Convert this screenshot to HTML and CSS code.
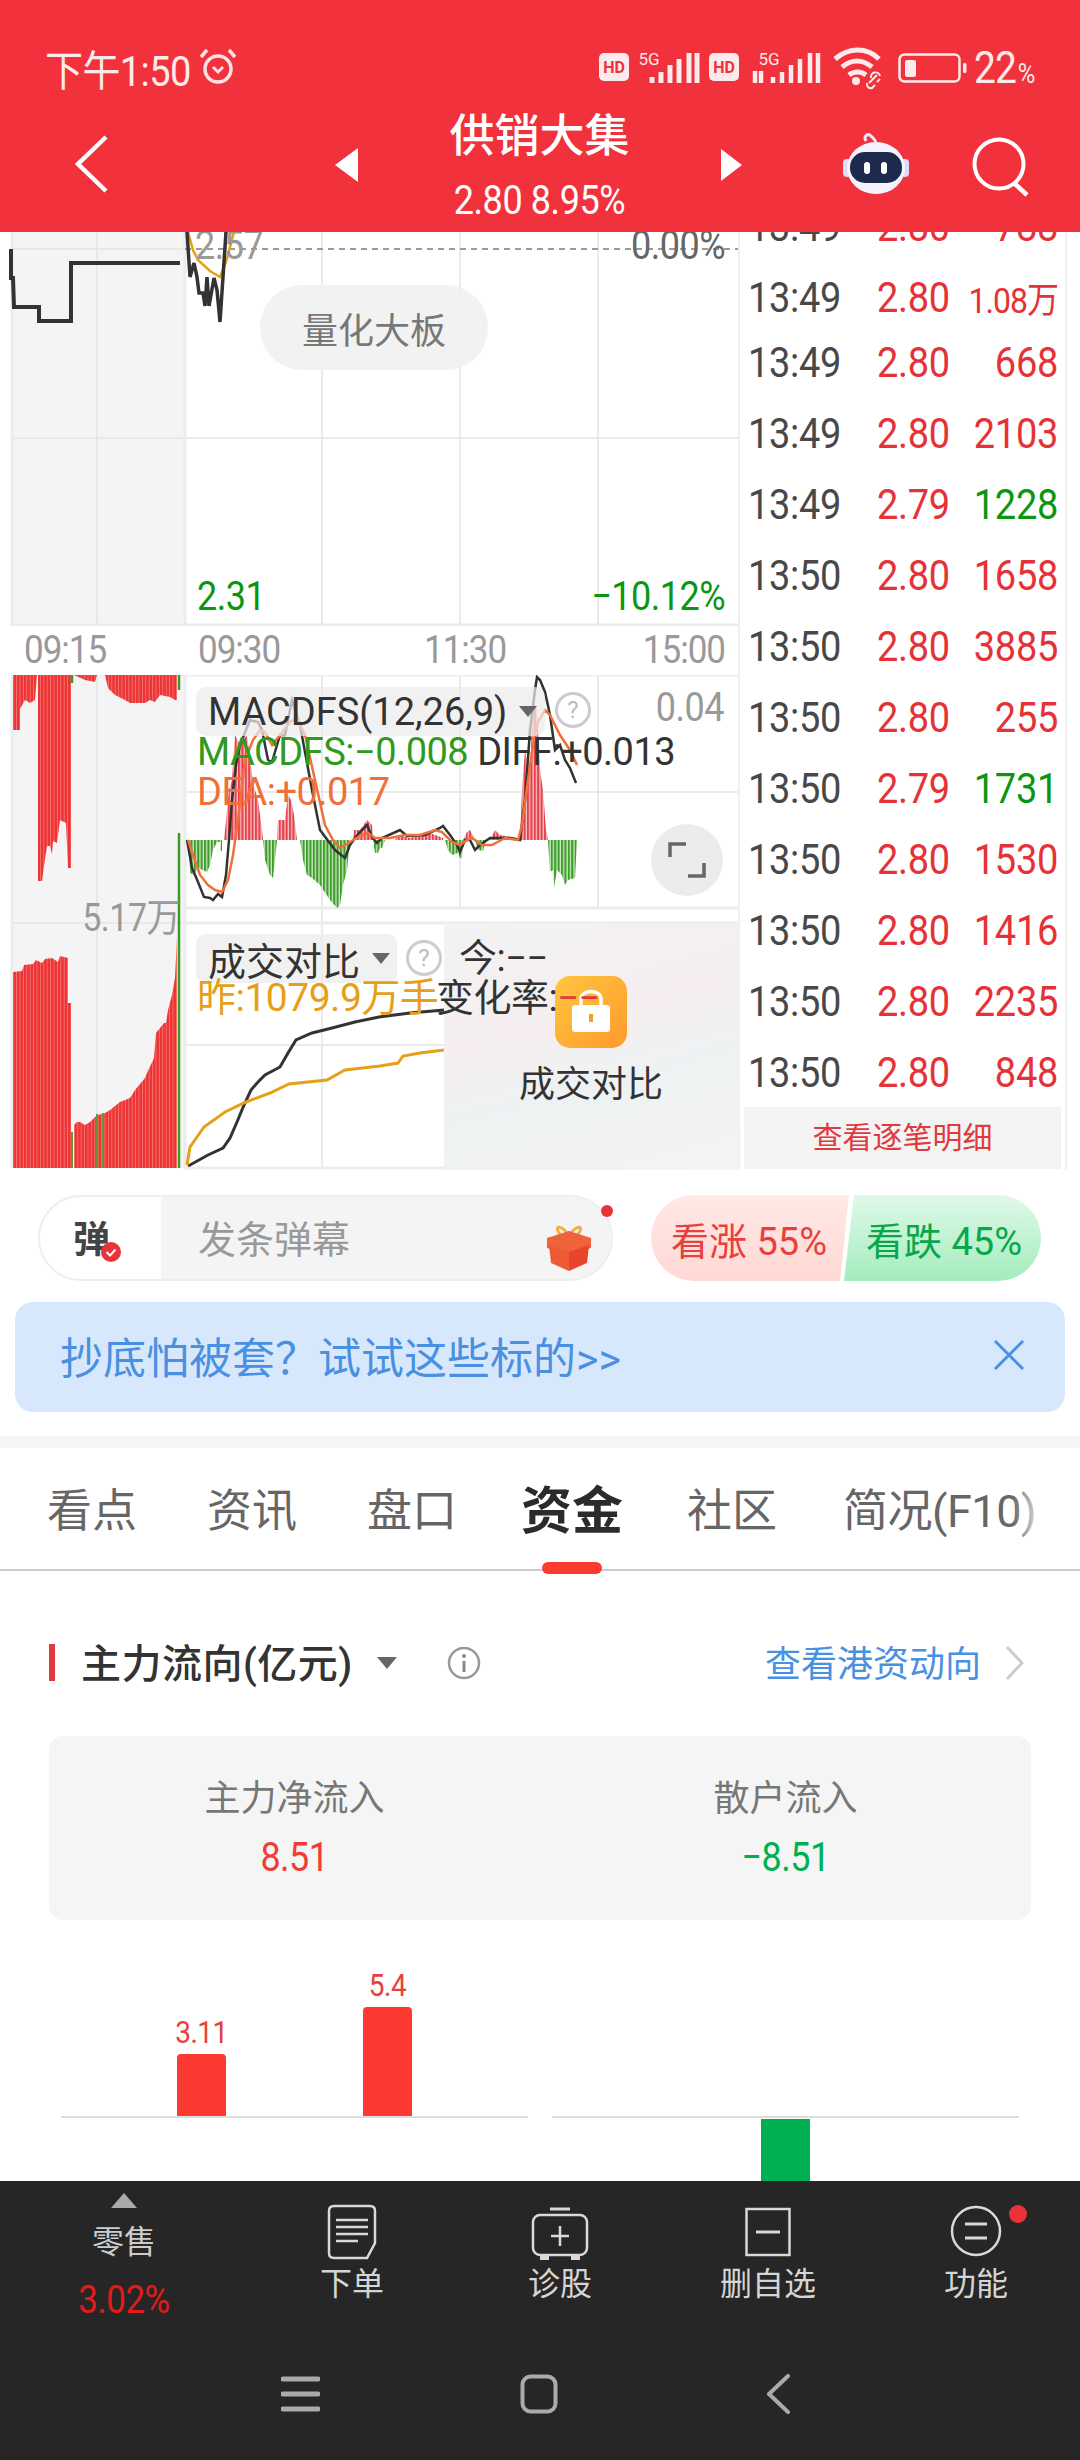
FILE: index.html
```html
<!DOCTYPE html>
<html lang="zh-CN">
<head>
  <meta charset="UTF-8">
  <meta name="viewport" content="width=device-width, initial-scale=1">
  <title>供销大集</title>
  <link rel="stylesheet" href="styles.css">
</head>

<body>
<div class="page">

  <header class="topbar">
    <div class="status">
      <span class="clock">下午1:50</span>
      <svg class="alarm" viewBox="0 0 40 40"><circle cx="20" cy="22" r="13" fill="none" stroke="#fde3e3" stroke-width="3.5"/><path d="M3 10 9 3M37 10 31 3" stroke="#fde3e3" stroke-width="3.5" fill="none"/><path d="M15 20l5 5 5-5" stroke="#fde3e3" stroke-width="3" fill="none"/></svg>
      <svg class="signals" viewBox="598 40 310 60">
        <rect x="598" y="54" width="30" height="28" rx="5" fill="#fdeaea"/>
        <text x="613" y="74" class="hd">HD</text>
        <text x="648" y="66" class="fiveg">5G</text>
        <path d="M651 84v-6M660 84v-11M669 84v-18M678 84v-24M688 84v-30M696 84v-30" stroke="#fdeaea" stroke-width="5" fill="none"/>
        <rect x="708" y="54" width="30" height="28" rx="5" fill="#fdeaea"/>
        <text x="723" y="74" class="hd">HD</text>
        <text x="768" y="66" class="fiveg">5G</text>
        <path d="M754 84v-12M760 72v12M772 84v-6M781 84v-11M790 84v-18M799 84v-24M809 84v-30M817 84v-30" stroke="#fdeaea" stroke-width="4.5" fill="none"/>
        <path d="M834 60c14-12 32-12 44 0M841 68c10-8 20-8 30 0M848 76c5-4 12-4 17 0" stroke="#fdeaea" stroke-width="5" fill="none"/>
        <circle cx="855" cy="82" r="4" fill="#fdeaea"/>
        <path d="M868 84l8-8M866 84a4 4 0 0 0 5 5l3-3M879 80l-3 3M870 79a4 4 0 0 1 9-2" stroke="#fdeaea" stroke-width="2" fill="none"/>
      </svg>
      <svg class="battery" viewBox="0 0 70 32"><rect x="1.5" y="1.5" width="60" height="27" rx="5" fill="none" stroke="#fdeaea" stroke-width="2.5"/><rect x="7" y="7" width="11" height="17" rx="2" fill="#fdeaea"/><rect x="65" y="10" width="3.5" height="10" rx="1.5" fill="#fdeaea"/></svg>
      <span class="level">22<small>%</small></span>
    </div>
    <div class="nav">
      <svg class="back" viewBox="0 0 33 58"><path d="M31 2 3 29l28 27" fill="none" stroke="#fff" stroke-width="4.5"/></svg>
      <span class="tri tri-left"></span>
      <div class="name">
        <div class="name-main">供销大集</div>
        <div class="name-sub">2.80 8.95%</div>
      </div>
      <span class="tri tri-right"></span>
      <svg class="robot" viewBox="0 0 66 62">
        <path d="M23 8c-3-5 2-8 5-5 2 2 4 3 5 7" fill="none" stroke="#e9e6f6" stroke-width="3"/>
        <rect x="0" y="26" width="8" height="18" rx="4" fill="#dcdcf4"/><rect x="58" y="26" width="8" height="18" rx="4" fill="#dcdcf4"/>
        <ellipse cx="33" cy="35" rx="29" ry="26" fill="#f4f2fc"/>
        <rect x="7" y="19" width="52" height="31" rx="15" fill="#1e2a4c"/>
        <rect x="21" y="29" width="6" height="12" rx="3" fill="#fff"/><rect x="38" y="29" width="6" height="12" rx="3" fill="#fff"/>
      </svg>
      <svg class="search" viewBox="0 0 60 60"><circle cx="29" cy="27" r="24.5" fill="none" stroke="#fff" stroke-width="4"/><path d="M44 46l13 12" stroke="#fff" stroke-width="4.5"/></svg>
    </div>
  </header>

  <section class="market">
    <div class="charts">
      <div class="pane pane-price">
        <svg class="plot" width="738" height="394" viewBox="0 232 738 394">
          <rect x="11" y="232" width="174" height="394" fill="#f4f4f4"/>
          <path d="M97 232v394M322 232v394M460 232v394M598 232v394M11 249h174M11 438h727" stroke="#e4e4e4" stroke-width="1.5"/>
          <path d="M12 232v394M185 232v394M11 625h727" stroke="#ececec" stroke-width="3"/>
          <path d="M185 249h553" stroke="#9a9a9a" stroke-width="2" stroke-dasharray="6 5"/>
          <polyline points="11,249 11,278 13,278 14,307 39,307 39,321 71,321 71,263 180,263" fill="none" stroke="#333" stroke-width="4"/>
          <polyline points="188,232 193,250 198,260 210,271 220,277 226,262 234,232" fill="none" stroke="#e6a018" stroke-width="2.5"/>
          <polyline points="187,232 190,277 194,263 197,277 199,293 203,293 205,306 207,277 209,306 214,278 217,290 220,322 226,232" fill="none" stroke="#333" stroke-width="3.5"/>
        </svg>
        <span class="lbl lbl-last">2.57</span>
        <span class="lbl lbl-zero">0.00%</span>
        <span class="lbl lbl-low">2.31</span>
        <span class="lbl lbl-lowpct">−10.12%</span>
        <div class="quant">量化大板</div>
      </div>

      <div class="axis">
        <span class="axis-a">09:15</span>
        <span class="axis-b">09:30</span>
        <span class="axis-c">11:30</span>
        <span class="axis-d">15:00</span>
      </div>

      <div class="pane pane-lower">
        <svg class="plot" width="738" height="495" viewBox="0 675 738 495">
          <defs>
            <pattern id="hatchRed" width="3.4" height="8" patternUnits="userSpaceOnUse"><rect width="3.4" height="8" fill="#f47a7a"/><rect width="2.6" height="8" fill="#ee3535"/></pattern>
            <pattern id="hatchLite" width="3.4" height="8" patternUnits="userSpaceOnUse"><rect width="3.4" height="8" fill="#f9c4c6"/><rect width="2.1" height="8" fill="#e6404a"/></pattern>
            <pattern id="hatchGreen" width="3.4" height="8" patternUnits="userSpaceOnUse"><rect width="3.4" height="8" fill="#cfe9c8"/><rect width="2.1" height="8" fill="#3e9e2a"/></pattern>
          </defs>
          <rect x="11" y="675" width="174" height="493" fill="#f4f4f4"/>
          <path d="M97 675v493M322 675v493M460 675v233M598 675v233M322 923v245M185 792h553M185 1045h553M11 923h174" stroke="#e4e4e4" stroke-width="1.5"/>
          <path d="M12 675v493M185 675v495M11 675h727M185 908h553M185 923h553M185 1168h553" stroke="#ececec" stroke-width="3"/>

          <polygon fill="url(#hatchRed)" points="13,675 13,730 20,730 20,709 25,700 30,703 35,700 37,675 38,675 38,881 42,881 44,866 47,846 50,846 52,854 53,841 57,843 60,820 66,823 68,868 71,868 71,675"/>
          <polygon fill="url(#hatchRed)" points="74,675 85,680 95,682 97,675"/>
          <polygon fill="url(#hatchRed)" points="105,675 108,688 115,695 125,700 130,703 145,703 150,700 155,702 160,695 170,697 175,700 177,700 177,675"/>
          <path d="M72 675v8M179 675v15M179 833v335" stroke="#3a9d23" stroke-width="2.5" fill="none"/>

          <polygon fill="url(#hatchRed)" points="13,1168 13,972 22,971 24,965 33,964 36,960 42,963 45,959 52,958 58,962 60,956 68,958 68,1003 71,1003 71,1168"/>
          <polygon fill="url(#hatchRed)" points="74,1168 74,1125 77,1122 80,1122 85,1125 90,1122 95,1117 98,1115 105,1113 110,1110 120,1102 130,1098 135,1090 145,1078 147,1073 154,1058 156,1033 164,1023 166,1023 168,1010 172,995 175,978 177,937 177,1168"/>
          <path d="M72 1132v36M97 1114v54M103 1113v55" stroke="#5d9a2c" stroke-width="2" fill="none"/>

          <g fill="url(#hatchGreen)">
            <polygon points="188,840 190,873 194,875 198,868 207,872 210,865 213,850 217,842 220,842 220,840"/>
            <polygon points="220,840 220,851 222,851 222,840"/>
            <polygon points="263,840 265,860 270,875 273,878 276,850 277,840"/>
            <polygon points="300,840 303,860 307,875 312,878 320,885 330,900 337,908 340,905 343,885 347,870 350,840"/>
            <polygon points="373,840 375,853 378,853 380,848 382,848 385,840"/>
            <polygon points="445,840 448,850 452,855 458,853 460,858 462,858 463,840"/>
            <polygon points="475,840 478,850 483,851 486,840"/>
            <polygon points="548,840 550,872 553,870 554,888 557,870 562,875 565,885 568,880 575,878 577,840"/>
          </g>
          <g fill="url(#hatchLite)">
            <polygon points="224,840 229,790 232,780 235,735 240,745 247,735 252,775 255,790 258,800 262,830 263,840"/>
            <polygon points="277,840 278,820 285,820 288,795 291,800 294,815 297,840"/>
            <polygon points="353,840 354,830 360,830 367,820 372,825 373,840"/>
            <polygon points="395,840 398,835 410,838 420,835 430,833 443,838 443,840"/>
            <polygon points="463,840 467,832 470,830 475,840"/>
            <polygon points="490,840 495,830 500,835 518,838 518,840"/>
            <polygon points="520,840 522,790 525,750 530,775 533,700 537,710 540,770 543,790 546,830 548,840"/>
          </g>
          <polyline points="187,840 192,868 198,882 204,897 210,898 213,900 218,894 222,897 226,875 229,840 232,800 236,765 240,745 250,720 258,722 262,730 268,760 272,762 280,735 285,735 292,700 300,725 312,790 320,830 335,850 345,858 350,845 355,838 360,832 367,825 372,837 377,843 382,838 400,830 407,836 425,835 440,828 443,826 450,835 457,845 460,852 465,840 470,840 475,850 480,845 490,838 510,838 520,840 525,800 530,730 535,690 537,677 540,680 545,692 550,715 555,750 560,745 565,760 570,768 576,783" fill="none" stroke="#333" stroke-width="2.5"/>
          <polyline points="188,840 193,855 200,875 208,885 215,890 222,892 228,880 233,855 238,820 245,760 253,740 260,730 265,732 272,745 280,735 290,722 297,718 305,735 315,780 325,825 333,840 340,848 350,842 360,836 368,833 375,838 390,838 405,835 420,835 435,830 442,832 452,842 460,845 467,840 472,838 482,845 492,845 505,838 518,840 522,825 528,780 533,745 538,722 545,710 550,715 560,735 570,750 577,765" fill="none" stroke="#f0703a" stroke-width="2.5"/>

          <polyline points="188,1166 190,1165 208,1155 223,1148 230,1138 237,1122 244,1105 251,1090 258,1082 265,1075 280,1067 288,1053 296,1040 312,1033 332,1028 355,1022 379,1017 410,1013 444,1010" fill="none" stroke="#333" stroke-width="3"/>
          <polyline points="187,1165 190,1147 204,1127 225,1112 246,1102 270,1093 289,1084 327,1080 345,1070 380,1066 398,1063 403,1056 420,1053 444,1050" fill="none" stroke="#e6a018" stroke-width="3"/>
        </svg>

        <div class="chip chip-macd">
          <span class="chip-text">MACDFS(12,26,9)</span>
          <span class="caret"></span>
        </div>
        <span class="help help-macd">?</span>
        <span class="lbl lbl-max">0.04</span>
        <span class="lbl lbl-macd"><span class="tx-green">MACDFS:−0.008</span> <span class="tx-dark">DIFF:+0.013</span></span>
        <span class="lbl lbl-dea">DEA:+0.017</span>
        <div class="expand">
          <svg viewBox="0 0 40 40" width="40" height="40"><path d="M3 17V4h16M37 23v13H21" fill="none" stroke="#666" stroke-width="3.5"/></svg>
        </div>

        <span class="lbl lbl-vol">5.17万</span>
        <div class="locked">
          <svg class="lock" viewBox="0 0 72 72">
            <defs><linearGradient id="lockFill" x1="0" y1="0" x2="1" y2="1"><stop offset="0" stop-color="#ffc63f"/><stop offset="1" stop-color="#ff9a2c"/></linearGradient></defs>
            <rect width="72" height="72" rx="15" fill="url(#lockFill)"/>
            <path d="M26 32v-9c0-10 20-10 20 0v9" fill="none" stroke="#fff" stroke-width="3.5"/>
            <rect x="17" y="29" width="38" height="27" rx="3" fill="#fff"/>
            <path d="M36 38v8" stroke="#f0a030" stroke-width="4"/>
          </svg>
          <div class="locked-name">成交对比</div>
        </div>
        <div class="chip chip-deal">
          <span class="chip-text">成交对比</span>
          <span class="caret"></span>
        </div>
        <span class="help help-deal">?</span>
        <span class="lbl lbl-today">今:−−</span>
        <span class="lbl lbl-yest">昨:1079.9万手</span>
        <span class="lbl lbl-rate">变化率:<span class="tx-red">−−</span></span>
      </div>
    </div>

    <aside class="ticks">
      <div class="tick-list">
        <div class="tick"><span class="t">13:49</span><span class="p">2.80</span><span class="v">788</span></div>
        <div class="tick tick-short"><span class="t">13:49</span><span class="p">2.80</span><span class="v v-small">1.08万</span></div>
        <div class="tick"><span class="t">13:49</span><span class="p">2.80</span><span class="v">668</span></div>
        <div class="tick"><span class="t">13:49</span><span class="p">2.80</span><span class="v">2103</span></div>
        <div class="tick"><span class="t">13:49</span><span class="p">2.79</span><span class="v tx-down">1228</span></div>
        <div class="tick"><span class="t">13:50</span><span class="p">2.80</span><span class="v">1658</span></div>
        <div class="tick"><span class="t">13:50</span><span class="p">2.80</span><span class="v">3885</span></div>
        <div class="tick"><span class="t">13:50</span><span class="p">2.80</span><span class="v">255</span></div>
        <div class="tick"><span class="t">13:50</span><span class="p">2.79</span><span class="v tx-down">1731</span></div>
        <div class="tick"><span class="t">13:50</span><span class="p">2.80</span><span class="v">1530</span></div>
        <div class="tick"><span class="t">13:50</span><span class="p">2.80</span><span class="v">1416</span></div>
        <div class="tick"><span class="t">13:50</span><span class="p">2.80</span><span class="v">2235</span></div>
        <div class="tick"><span class="t">13:50</span><span class="p">2.80</span><span class="v">848</span></div>
      </div>
      <div class="tick-more">查看逐笔明细</div>
    </aside>
  </section>

  <div class="actions">
    <div class="danmu">
      <div class="danmu-tag">
        <span class="danmu-char">弹</span>
        <svg class="danmu-check" viewBox="0 0 20 20"><circle cx="10" cy="10" r="10" fill="#e8333a"/><path d="M5.5 10l3.5 3.5 5.5-6" fill="none" stroke="#fff" stroke-width="2"/></svg>
      </div>
      <div class="danmu-input"><span>发条弹幕</span></div>
      <svg class="gift" viewBox="0 0 44 48">
        <path d="M22 12C12 0 8 4 12 10c2 3 6 3 10 2zM22 12C32 0 36 4 32 10c-2 3-6 3-10 2z" fill="none" stroke="#f0b040" stroke-width="3"/>
        <path d="M0 15 22 8l22 7v10L22 31 0 25z" fill="#f0623a"/>
        <path d="M2 22l20 7v19L4 40z" fill="#ee5a34"/>
        <path d="M42 22 22 29v19l18-8z" fill="#e8452c"/>
      </svg>
      <span class="danmu-dot"></span>
    </div>
    <div class="vote">
      <div class="vote-up">看涨 55%</div>
      <div class="vote-down">看跌 45%</div>
    </div>
  </div>

  <div class="banner">
    <span class="banner-text">抄底怕被套？试试这些标的&gt;&gt;</span>
    <svg class="banner-close" viewBox="0 0 32 32"><path d="M2 2l28 28M30 2 2 30" stroke="#4a90e2" stroke-width="3"/></svg>
  </div>

  <div class="band"></div>

  <nav class="tabs">
    <span class="tab">看点</span>
    <span class="tab">资讯</span>
    <span class="tab">盘口</span>
    <span class="tab tab-on">资金</span>
    <span class="tab">社区</span>
    <span class="tab tab-last">简况(F10)</span>
  </nav>

  <section class="flow">
    <div class="flow-head">
      <span class="flow-mark"></span>
      <span class="flow-title">主力流向(亿元)</span>
      <span class="caret caret-flow"></span>
      <svg class="flow-info" viewBox="0 0 34 34"><circle cx="17" cy="17" r="15" fill="none" stroke="#999" stroke-width="2.5"/><circle cx="17" cy="10" r="2" fill="#888"/><path d="M17 15v11" stroke="#888" stroke-width="3"/></svg>
      <span class="flow-link">查看港资动向</span>
      <svg class="flow-more" viewBox="0 0 20 36"><path d="M3 2l15 16L3 34" fill="none" stroke="#ccc" stroke-width="3"/></svg>
    </div>

    <div class="summary">
      <div class="summary-cell">
        <div class="summary-label">主力净流入</div>
        <div class="summary-value tx-rise">8.51</div>
      </div>
      <div class="summary-cell">
        <div class="summary-label">散户流入</div>
        <div class="summary-value tx-fall">−8.51</div>
      </div>
    </div>

    <div class="bars">
      <div class="bar-group">
        <div class="bar-up bar-up-left">
          <div class="bar-col"><span class="bar-num">3.11</span><span class="bar bar-a"></span></div>
          <div class="bar-col"><span class="bar-num">5.4</span><span class="bar bar-b"></span></div>
        </div>
      </div>
      <div class="bar-group">
        <div class="bar-up"></div>
        <div class="bar-down"></div>
      </div>
    </div>
  </section>

  <footer class="dock">
    <div class="dock-tabs">
      <div class="dock-item dock-index">
        <svg class="dock-tri" viewBox="0 0 26 15"><path d="M13 0l13 15H0z" fill="#aaa"/></svg>
        <div class="dock-name">零售</div>
        <div class="dock-pct">3.02%</div>
      </div>
      <div class="dock-item">
        <svg class="dock-icon" viewBox="0 0 50 56"><path d="M7 2h36q5 0 5 5v32l-8 15H7q-5 0-5-5V7q0-5 5-5z" fill="none" stroke="#d9d9d9" stroke-width="2.5"/><path d="M9 16h32M9 23h32M9 30h32M9 37h22" stroke="#d9d9d9" stroke-width="2.5"/></svg>
        <div class="dock-name">下单</div>
      </div>
      <div class="dock-item">
        <svg class="dock-icon" viewBox="0 0 58 56"><path d="M19 5h20" stroke="#d9d9d9" stroke-width="3"/><rect x="2" y="11" width="54" height="40" rx="7" fill="none" stroke="#d9d9d9" stroke-width="2.5"/><path d="M29 22v20M20 32h18" stroke="#d9d9d9" stroke-width="2.5"/><path d="M9 52h9v4H9zM40 52h9v4h-9z" fill="#d9d9d9"/></svg>
        <div class="dock-name">诊股</div>
      </div>
      <div class="dock-item">
        <svg class="dock-icon" viewBox="0 0 46 56"><rect x="1.5" y="5" width="43" height="46" fill="none" stroke="#d9d9d9" stroke-width="2.5"/><path d="M11 28h24" stroke="#d9d9d9" stroke-width="3"/></svg>
        <div class="dock-name">删自选</div>
      </div>
      <div class="dock-item">
        <svg class="dock-icon" viewBox="0 0 52 56"><circle cx="26" cy="27" r="24" fill="none" stroke="#d9d9d9" stroke-width="2.5"/><path d="M15 20h22M15 34h22" stroke="#d9d9d9" stroke-width="3"/></svg>
        <div class="dock-name">功能</div>
        <span class="dock-dot"></span>
      </div>
    </div>
    <div class="sysnav">
      <svg class="sys-menu" viewBox="0 0 39 36"><path d="M2 3h35M2 18h35M2 33h35" stroke="#aaa" stroke-width="5" stroke-linecap="round"/></svg>
      <svg class="sys-home" viewBox="0 0 38 40"><rect x="2.5" y="2.5" width="33" height="35" rx="8" fill="none" stroke="#aaa" stroke-width="4"/></svg>
      <svg class="sys-back" viewBox="0 0 24 40"><path d="M22 2 3 20l19 18" fill="none" stroke="#aaa" stroke-width="4" stroke-linecap="round" stroke-linejoin="round"/></svg>
    </div>
  </footer>

</div>
</body>
</html>
```

FILE: styles.css
```css
* { margin: 0; padding: 0; box-sizing: border-box; }
body { width: 1080px; height: 2460px; overflow: hidden; background: #fff; color: #333; font-family: Roboto, "Noto Sans CJK SC", sans-serif; }
svg { display: block; flex: none; }
.page { width: 1080px; height: 2460px; display: flex; flex-direction: column; }

/* the app's number font is narrower and taller than Roboto */
.clock, .level, .name-sub, .axis span, .tick span, .lbl-last, .lbl-zero, .lbl-low, .lbl-lowpct, .lbl-max, .lbl-vol, .summary-value, .dock-pct, .bar-num { display: inline-block; transform: scaleY(1.12); }

/* top red bar */
.topbar { height: 232px; flex: none; background: #f1313b; color: #fff; position: relative; z-index: 2; }
.status { height: 100px; padding: 34px 0 0 45px; display: flex; align-items: center; color: #fdeaea; }
.clock { width: 149px; font-size: 38px; letter-spacing: -0.6px; white-space: nowrap; }
.alarm { width: 40px; height: 40px; margin-left: 4px; }
.signals { width: 310px; height: 60px; margin-left: 361px; margin-top: 4px; }
.hd { font: 700 16px Roboto, sans-serif; fill: #f1313b; text-anchor: middle; }
.fiveg { font: 400 17px Roboto, sans-serif; fill: #fdeaea; text-anchor: middle; }
.battery { width: 70px; height: 32px; margin-left: -11px; margin-top: 4px; }
.level { margin-left: 6px; font-size: 39px; letter-spacing: -1px; margin-top: 2px; }
.level small { font-size: 24px; margin-left: 2px; }

.nav { height: 132px; padding: 10px 0 0 75px; display: flex; align-items: center; }
.back { width: 33px; height: 58px; margin-right: 227px; margin-top: -14px; }
.tri { width: 0; height: 0; border-style: solid; margin-top: -12px; }
.tri-left { border-width: 17px 23px 17px 0; border-color: transparent #fff transparent transparent; }
.tri-right { border-width: 16px 0 16px 21px; border-color: transparent transparent transparent #fff; }
.name { width: 363px; text-align: center; align-self: flex-start; }
.name-main { margin-top: 2px; font-size: 45px; line-height: 50px; font-weight: 500; }
.name-sub { display: block; margin-top: 18px; font-size: 36px; line-height: 42px; letter-spacing: -0.4px; }
.robot { width: 66px; height: 62px; margin-left: 101px; margin-top: -14px; }
.search { width: 60px; height: 60px; margin-left: 61px; margin-top: -8px; }

/* market area */
.market { height: 938px; flex: none; display: flex; overflow: hidden; }
.charts { width: 738px; flex: none; }
.pane { position: relative; width: 738px; }
.pane-price { height: 394px; }
.pane-lower { height: 495px; }
.axis { height: 49px; padding: 0 13px 0 24px; display: flex; align-items: center; font-size: 35px; letter-spacing: -1px; color: #999; }
.axis-a { width: 174px; }
.axis-b { width: 226px; }
.axis-d { margin-left: auto; }

.lbl { position: absolute; font-size: 36px; line-height: 44px; letter-spacing: -0.5px; white-space: nowrap; }
.lbl-last { left: 195px; top: -8px; color: #999; }
.lbl-zero { right: 13px; top: -8px; color: #666; }
.lbl-low { left: 197px; top: 343px; color: #0a960f; }
.lbl-lowpct { right: 13px; top: 343px; color: #0a960f; }
.quant { position: absolute; left: 260px; top: 53px; width: 228px; height: 85px; border-radius: 42px; background: rgba(241, 241, 241, 0.95); color: #777; font-size: 36px; display: flex; align-items: center; justify-content: center; }

.chip { position: absolute; left: 196px; height: 49px; padding-left: 12px; border-radius: 10px; background: rgba(236, 236, 236, 0.72); display: flex; align-items: center; }
.chip-text { font-size: 38px; color: #333; white-space: nowrap; }
.chip-macd { top: 12px; width: 349px; }
.chip-deal { top: 259px; width: 201px; }
.caret { width: 0; height: 0; border-style: solid; border-width: 11px 9px 0; border-color: #666 transparent transparent; margin-left: 12px; }
.help { position: absolute; width: 36px; height: 36px; border: 3px solid #ccc; border-radius: 50%; color: #bbb; font-size: 24px; line-height: 30px; text-align: center; }
.help-macd { left: 555px; top: 17px; }
.help-deal { left: 406px; top: 265px; }
.lbl-max { right: 14px; top: 11px; color: #999; }
.lbl-macd { left: 197px; top: 55px; font-size: 38px; }
.lbl-dea { left: 197px; top: 95px; font-size: 38px; color: #f0703a; }
.tx-green { color: #2f9a1e; }
.tx-dark { color: #333; }
.tx-red { color: #e03a3a; }
.expand { position: absolute; left: 651px; top: 149px; width: 72px; height: 72px; border-radius: 50%; background: #ececec; display: flex; align-items: center; justify-content: center; }
.lbl-vol { right: 558px; top: 221px; font-size: 34px; color: #999; }
.locked { position: absolute; left: 444px; top: 248px; width: 294px; height: 247px; padding-top: 53px; background: linear-gradient(165deg, #f2f2f3 0%, #f6eef0 40%, #eef2f3 62%, #f5f3f5 100%); display: flex; flex-direction: column; align-items: center; }
.lock { width: 72px; height: 72px; }
.locked-name { margin-top: 15px; font-size: 36px; line-height: 44px; color: #333; }
.lbl-today { left: 459px; top: 261px; font-size: 38px; color: #333; }
.lbl-yest { left: 197px; top: 301px; font-size: 39px; color: #e6a018; }
.lbl-rate { left: 436px; top: 301px; font-size: 38px; color: #333; }

/* tick list */
.ticks { width: 329px; flex: none; border-left: 2px solid #f0f0f0; border-right: 2px solid #f0f0f0; display: flex; flex-direction: column; overflow: hidden; }
.tick-list { margin-top: -42px; }
.tick { height: 71px; padding: 0 7px 0 8px; display: flex; align-items: center; font-size: 38px; letter-spacing: -0.3px; color: #e53238; white-space: nowrap; }
.tick-short { height: 65px; padding-top: 6px; }
.t { width: 129px; color: #484848; }
.p { width: 90px; }
.v { flex: 1; text-align: right; }
.v-small { margin-left: -10px; font-size: 32px; letter-spacing: -1px; }
.tx-down { color: #0a960f; }
.tick-more { height: 62px; margin: 0 4px; padding-bottom: 6px; background: #f3f3f3; color: #e0393e; font-size: 30px; display: flex; align-items: center; justify-content: center; }

/* danmu + vote */
.actions { margin-top: 25px; height: 86px; flex: none; padding: 0 39px 0 38px; display: flex; justify-content: space-between; }
.danmu { position: relative; width: 575px; height: 86px; border: 2px solid #eee; border-radius: 43px; display: flex; overflow: visible; }
.danmu-tag { position: relative; width: 121px; display: flex; align-items: center; padding: 0 0 3px 33px; }
.danmu-char { font-size: 37px; font-weight: 700; color: #444; }
.danmu-check { position: absolute; left: 61px; top: 45px; width: 20px; height: 20px; }
.danmu-input { flex: 1; background: #f4f4f4; border-radius: 0 42px 42px 0; padding: 0 0 4px 37px; font-size: 38px; color: #999; display: flex; align-items: center; }
.gift { position: absolute; left: 507px; top: 26px; width: 44px; height: 48px; }
.danmu-dot { position: absolute; left: 561px; top: 8px; width: 12px; height: 12px; border-radius: 50%; background: #e8333a; }
.vote { width: 390px; display: flex; font-size: 38px; }
.vote-up, .vote-down { height: 86px; display: flex; align-items: center; white-space: nowrap; }
.vote-up { width: 198px; padding-left: 20px; color: #e8403c; background: linear-gradient(#ffe9e6, #ffd9d5); border-radius: 43px 0 0 43px; clip-path: polygon(0 0, 100% 0, calc(100% - 9px) 100%, 0 100%); }
.vote-down { width: 197px; margin-left: -5px; padding-left: 22px; color: #08a84a; background: linear-gradient(#e0f9e9, #a3ecbd); border-radius: 0 43px 43px 0; clip-path: polygon(10px 0, 100% 0, 100% 100%, 0 100%); }

/* banner */
.banner { margin: 21px 15px 0; height: 110px; flex: none; padding: 0 40px 4px 45px; border-radius: 18px; background: #d8e8fc; color: #4a90e2; display: flex; align-items: center; justify-content: space-between; }
.banner-text { font-size: 43px; white-space: nowrap; }
.banner-close { width: 32px; height: 32px; }
.band { margin-top: 24px; height: 12px; flex: none; background: #f5f5f5; }

/* tabs */
.tabs { position: relative; height: 123px; flex: none; padding: 0 0 3px 47px; border-bottom: 2px solid #ccc; display: flex; align-items: center; gap: 70px; font-size: 45px; color: #666; white-space: nowrap; }
.tab { position: relative; }
.tab-on { margin: 0 -6px; font-size: 51px; font-weight: 700; color: #2b2b2b; }
.tab-on::after { content: ""; position: absolute; left: 21px; bottom: -30px; width: 60px; height: 12px; border-radius: 6px; background: #fc3a32; }
.tab-last { margin-left: -4px; letter-spacing: -0.5px; }
.tabs::after { content: ""; position: absolute; right: 44px; top: 30px; width: 24px; height: 70px; background: linear-gradient(to right, rgba(255, 255, 255, 0), rgba(255, 255, 255, 0.7)); }

/* money flow */
.flow { flex: 1; min-height: 0; overflow: hidden; padding: 73px 49px 0; }
.flow-head { height: 37px; display: flex; align-items: center; }
.flow-mark { width: 6px; height: 37px; background: #e0393e; }
.flow-title { margin: -3px 0 0 26px; font-size: 40px; letter-spacing: 0.5px; font-weight: 500; color: #333; white-space: nowrap; }
.caret-flow { margin-left: 24px; border-width: 12px 10px 0; }
.flow-info { width: 34px; height: 34px; margin-left: 50px; }
.flow-link { margin: -3px 0 0 auto; font-size: 36px; color: #4a90e2; white-space: nowrap; }
.flow-more { width: 20px; height: 36px; margin: 0 7px 0 23px; }
.summary { margin-top: 55px; height: 184px; padding-top: 40px; border-radius: 14px; background: #f5f5f5; display: grid; grid-template-columns: 1fr 1fr; text-align: center; }
.summary-label { font-size: 36px; line-height: 46px; color: #777; }
.summary-value { margin-top: 14px; font-size: 36px; line-height: 44px; letter-spacing: -0.5px; }
.tx-rise { color: #f33c35; }
.tx-fall { color: #00b050; }
.bars { margin-top: 40px; padding: 0 12px; display: grid; grid-template-columns: 467px 467px; gap: 24px; }
.bar-up { height: 158px; border-bottom: 2px solid #ddd; display: flex; align-items: flex-end; }
.bar-up-left { padding-left: 116px; gap: 137px; }
.bar-col { width: 49px; display: flex; flex-direction: column; align-items: center; }
.bar-num { font-size: 28px; line-height: 36px; letter-spacing: -0.5px; color: #e8403c; margin-bottom: 3px; }
.bar { width: 49px; background: #fc3a32; border-radius: 4px 4px 0 0; }
.bar-a { height: 62px; }
.bar-b { height: 109px; }
.bar-down { width: 49px; height: 70px; margin: 1px 0 0 209px; background: #00b050; }

/* dock */
.dock { height: 279px; flex: none; background: #262626; }
.dock-tabs { height: 147px; display: grid; grid-template-columns: 248px repeat(4, 208px); }
.dock-item { position: relative; padding-top: 23px; display: flex; flex-direction: column; align-items: center; }
.dock-icon { height: 56px; width: auto; }
.dock-name { margin-top: 2px; font-size: 32px; line-height: 44px; color: #d5d5d5; white-space: nowrap; }
.dock-index { padding-top: 12px; }
.dock-tri { width: 26px; height: 15px; }
.dock-index .dock-name { margin-top: 12px; color: #ccc; }
.dock-pct { margin-top: 15px; font-size: 35px; line-height: 44px; letter-spacing: -0.5px; color: #e01b1b; }
.dock-dot { position: absolute; left: 137px; top: 24px; width: 18px; height: 18px; border-radius: 50%; background: #ee3338; }
.sysnav { height: 132px; padding-left: 281px; display: flex; align-items: center; }
.sys-menu { width: 39px; height: 36px; }
.sys-home { width: 38px; height: 40px; margin-left: 200px; }
.sys-back { width: 24px; height: 40px; margin-left: 208px; }
```
